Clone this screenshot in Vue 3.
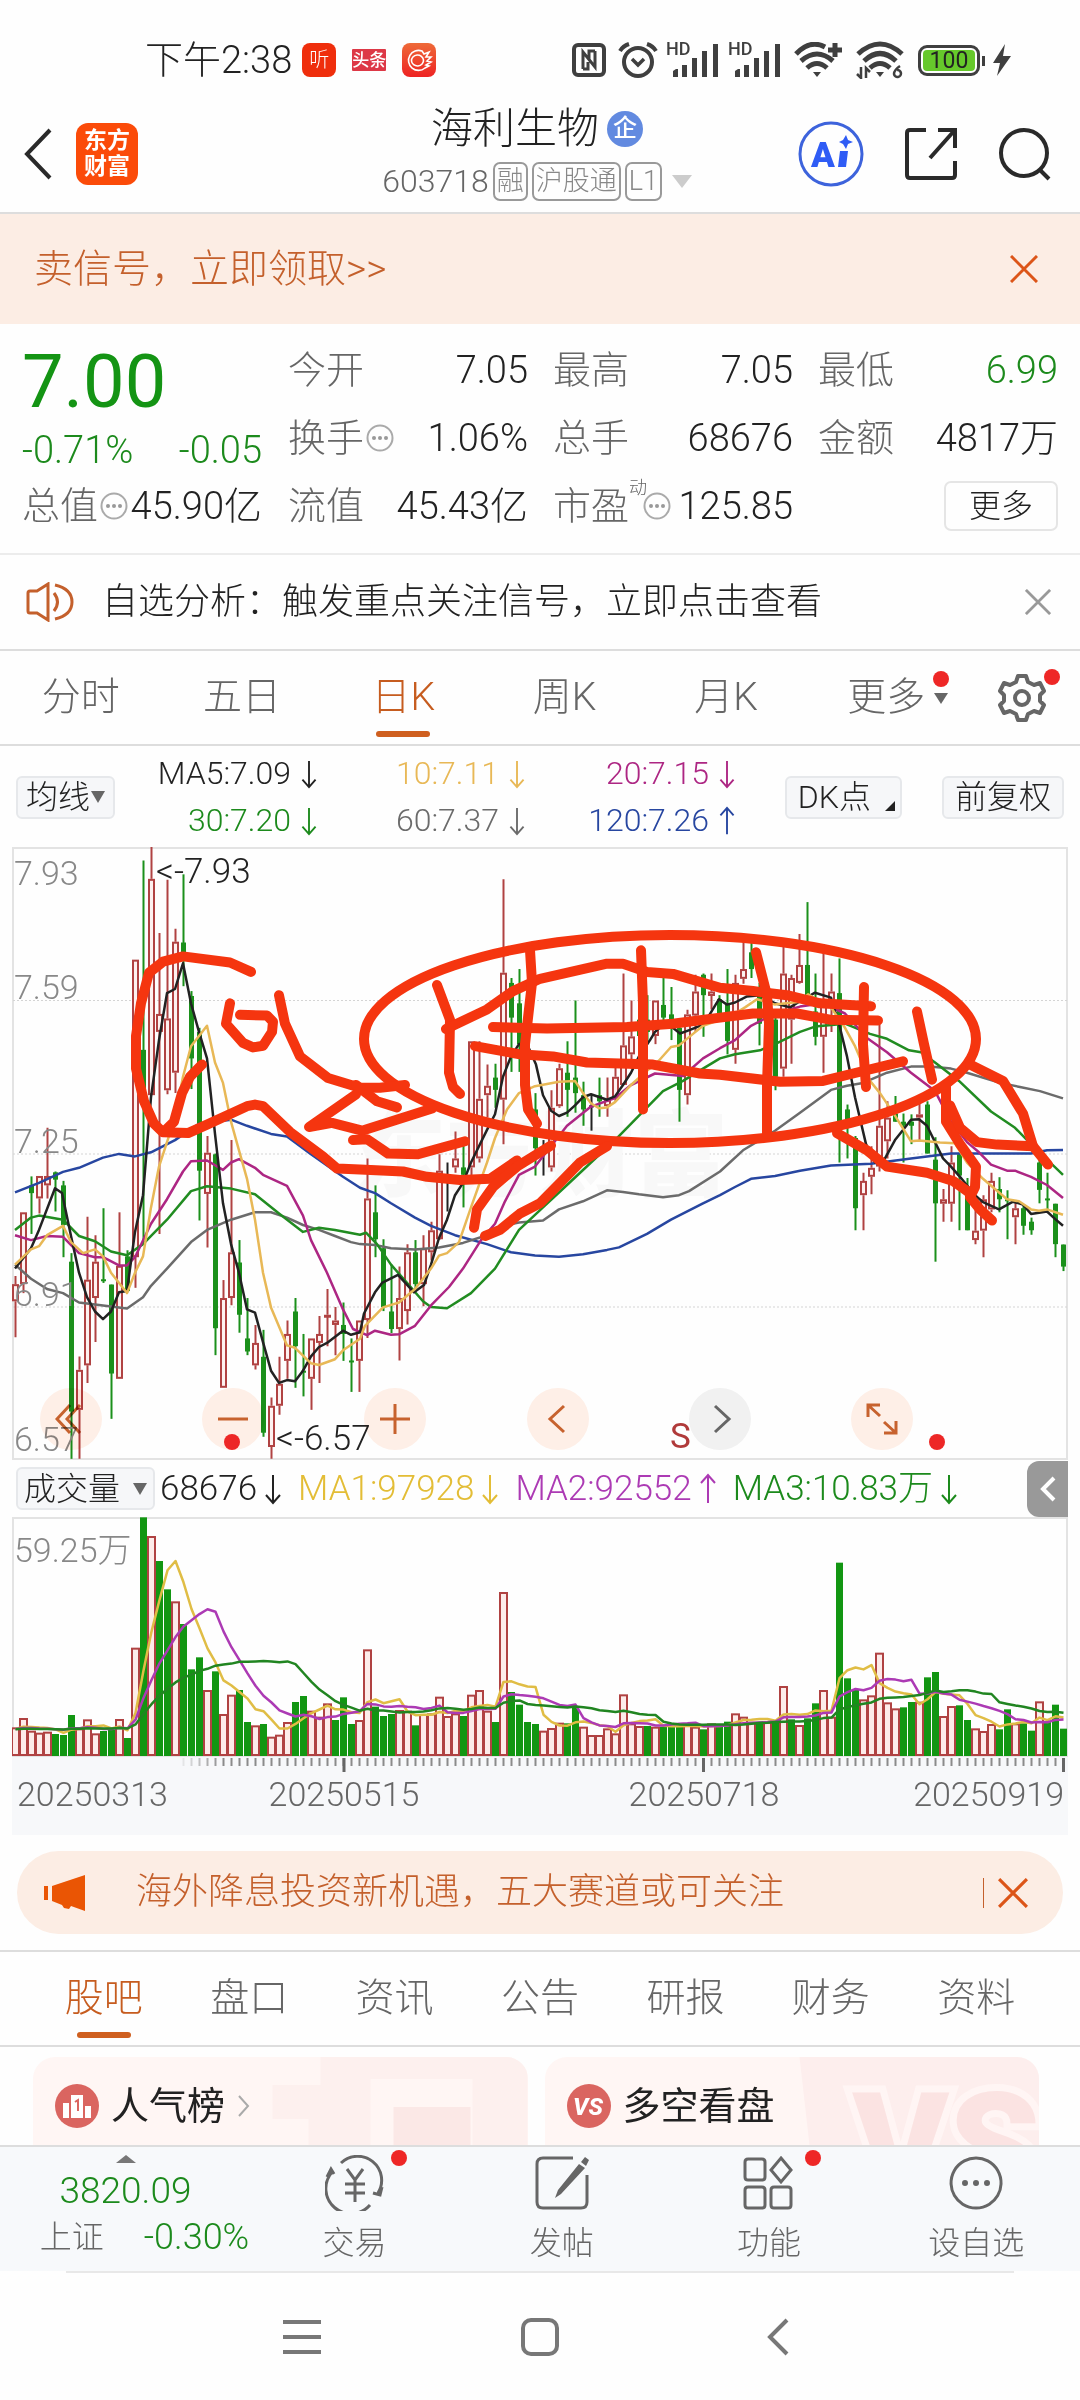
<template>
  <div class="app">
    <svg class="symbols" aria-hidden="true">
      <symbol id="arrow" viewBox="0 0 16 32">
        <path d="M8 2v27M1 22l7 8 7-8" fill="none" stroke="currentColor" stroke-width="2" />
      </symbol>
      <symbol id="close" viewBox="0 0 28 28">
        <path d="M1 1l26 26M27 1L1 27" fill="none" stroke="currentColor" stroke-width="3" />
      </symbol>
      <symbol id="more-dot" viewBox="0 0 28 28">
        <circle cx="14" cy="14" r="12.5" fill="none" stroke="#aaa" stroke-width="2" />
        <g fill="#999"><circle cx="8" cy="14" r="2" /><circle cx="14" cy="14" r="2" /><circle cx="20" cy="14" r="2" /></g>
      </symbol>
      <symbol id="signal" viewBox="0 0 52 36">
        <path d="M3 35v-6l3-2h2v8zM12 35V23h5v12zM22 35V16h5v19zM32 35V9h5v26zM43 35V2h5v33z" fill="#3f3f3f" />
      </symbol>
    </svg>

    <div class="status-bar">
      <div class="status-left">
        <span class="clock">下午2:38</span>
        <span class="mini listen">听</span>
        <span class="mini toutiao">头条</span>
        <span class="mini flame">
          <svg viewBox="0 0 34 34" width="34" height="34" fill="none" stroke="#fff" stroke-width="1.6">
            <path d="M20 8a10 10 0 1 0 3 17l4-2-3-1 5-3-4-1 4-4-5 0 3-5-5 2zM15 12a6 5.500 0 1 0 1 11 6 5.500 0 0 0-1-11z" />
          </svg>
        </span>
      </div>
      <div class="status-right">
        <svg viewBox="0 0 34 34" width="34" height="34">
          <rect x="2" y="2" width="30" height="30" rx="4" fill="none" stroke="#3f3f3f" stroke-width="4" />
          <path d="M11 26V9l12 15V8M23 8h-6v8M11 26h5v-7" fill="none" stroke="#3f3f3f" stroke-width="3" />
        </svg>
        <svg viewBox="0 0 40 36" width="40" height="36" fill="none" stroke="#3f3f3f">
          <circle cx="20" cy="20" r="14" stroke-width="4" />
          <path d="M14 17l6 6 6-6" stroke-width="3.500" />
          <path d="M2 9q3-5 9-7M38 9q-3-5-9-7" stroke-width="4" />
        </svg>
        <span class="hd"><small>HD</small><svg width="52" height="36"><use href="#signal" /></svg></span>
        <span class="hd"><small>HD</small><svg width="52" height="36"><use href="#signal" /></svg></span>
        <svg viewBox="0 0 50 36" width="50" height="36" fill="none" stroke="#3f3f3f" stroke-width="5">
          <path d="M2 12Q16-3 31 5M7 19q16-14 32 0M13 26q10-9 20 0M41 1v14M34 8h14" />
          <path d="M19 30h8l-4 5z" fill="#3f3f3f" stroke="none" />
        </svg>
        <svg viewBox="0 0 50 38" width="50" height="38" fill="none" stroke="#3f3f3f" stroke-width="5">
          <path d="M2 13q22-20 44 0M8 20q16-15 32 0M14 27q10-9 20 0" />
          <path d="M20 31h8l-4 5z" fill="#3f3f3f" stroke="none" />
          <path d="M5 26v11l-4-4M10 37V27l4 4M44 25q-6 4-6 8a3.500 3.500 0 1 0 3-4" stroke-width="2.500" />
        </svg>
        <span class="battery"><b>100</b></span>
        <svg class="bolt" viewBox="0 0 20 32" width="20" height="32"><path d="M13 0L1 19h7L5 32 19 12h-8z" fill="#3f3f3f" /></svg>
      </div>
    </div>

    <header class="header">
      <div class="header-side start">
        <button class="plain" aria-label="返回">
          <svg viewBox="0 0 32 52" width="32" height="52"><path d="M28 2L5 26l23 24" fill="none" stroke="#2a2a2a" stroke-width="4" /></svg>
        </button>
        <a href="#" class="logo">东方<br />财富</a>
      </div>
      <div class="header-title">
        <h1>海利生物<span class="badge">企</span></h1>
        <p>603718<span class="tag">融</span><span class="tag">沪股通</span><span class="tag">L1</span><i class="tri"></i></p>
      </div>
      <div class="header-side end">
        <button class="plain" aria-label="Ai">
          <svg viewBox="0 0 66 66" width="66" height="66">
            <circle cx="33" cy="33" r="31" fill="none" stroke="#3d63dc" stroke-width="3" />
            <text x="13" y="46" font-size="35" font-weight="900" fill="#2f5cf5">A</text>
            <path d="M42 30h8l-2 16h-8zM48 14l2 5 5 2-5 2-2 5-3-5-4-2 4-2z" fill="#2f5cf5" />
          </svg>
        </button>
        <button class="plain" aria-label="分享">
          <svg viewBox="0 0 54 54" width="54" height="54" fill="none" stroke="#2a2a2a" stroke-width="4">
            <path d="M22 3H6q-3 0-3 3v42q0 3 3 3h42q3 0 3-3V34M34 3h17v18M50 4L26 31" />
          </svg>
        </button>
        <button class="plain" aria-label="搜索">
          <svg viewBox="0 0 54 54" width="54" height="54" fill="none" stroke="#2a2a2a" stroke-width="4">
            <circle cx="26" cy="26" r="23" /><path d="M42 43l9 9" />
          </svg>
        </button>
      </div>
    </header>

    <div class="signal-banner">
      <a href="#">卖信号，立即领取&gt;&gt;</a>
      <button class="plain" aria-label="关闭"><svg width="28" height="28"><use href="#close" /></svg></button>
    </div>

    <section class="quote">
      <div class="price">
        <strong>7.00</strong>
        <div class="change"><span>-0.71%</span><span>-0.05</span></div>
        <div class="cell"><span class="k">总值<svg width="28" height="28"><use href="#more-dot" /></svg></span><span>45.90亿</span></div>
      </div>
      <div class="grid">
        <div v-for="q in quotes" :key="q.label" class="cell">
          <span class="k">{{ q.label }}<sup v-if="q.sup">{{ q.sup }}</sup><svg v-if="q.info" width="28" height="28"><use href="#more-dot" /></svg></span>
          <span :class="{ down: q.down }">{{ q.value }}</span>
        </div>
        <div class="cell right"><button class="more">更多</button></div>
      </div>
    </section>

    <div class="notice">
      <svg viewBox="0 0 48 40" width="48" height="40" fill="none" stroke="#c4602c" stroke-width="3">
        <path d="M22 2L11 9H4q-2 0-2 2v18q0 2 2 2h7l11 7zM28 11q7 9 0 18M29 3q17 4 17 17T29 37" />
      </svg>
      <a href="#">自选分析：触发重点关注信号，立即点击查看</a>
      <button class="plain" aria-label="关闭"><svg width="26" height="26"><use href="#close" /></svg></button>
    </div>

    <nav class="period">
      <div class="period-tabs">
        <button v-for="p in periods" :key="p" class="tab" :class="{ active: p === period }" @click="period = p">{{ p }}</button>
        <button class="tab">更多<span class="drop"><i class="dot"></i><i class="tri"></i></span></button>
      </div>
      <button class="plain gear" aria-label="设置">
        <svg viewBox="0 0 50 50" width="50" height="50" fill="none" stroke="#666" stroke-width="4" stroke-linejoin="round">
          <path d="M21 3h8l2 6 6 3 6-2 4 8-4 4v6l4 4-4 8-6-2-6 3-2 6h-8l-2-6-6-3-6 2-4-8 4-4v-6l-4-4 4-8 6 2 6-3z" />
          <circle cx="25" cy="25" r="7" />
        </svg>
        <i class="dot"></i>
      </button>
    </nav>

    <div class="ma-row">
      <label class="chip"><select aria-label="均线"><option>均线</option></select><i class="tri"></i></label>
      <div class="ma-grid">
        <span v-for="m in averages" :key="m.text" :class="m.cls">{{ m.text }}<svg :class="{ up: m.up }" width="16" height="30"><use href="#arrow" /></svg></span>
      </div>
      <button class="chip dk">DK点<i></i></button>
      <button class="chip">前复权</button>
    </div>

    <div class="chart">
      <svg class="plot" viewBox="12 0 1056 613">
        <rect x="13" y="1" width="1054" height="611" fill="none" stroke="#e3e3e3" stroke-width="2" />
        <path d="M13 153.500H1067M13 307H1067M13 460H1067" stroke="#d4d4d4" stroke-dasharray="2 2" />
        <text class="watermark" x="540" y="342">东方财富</text>
        <g v-for="(c, i) in candles" :key="i" :class="['candle', c[0]]">
          <path v-if="c[0] === 'r'" :d="wicks(c, i)" />
          <path v-else :d="`M${x(i)} ${y(c[3])}V${y(c[4])}`" />
          <rect v-if="c[0] === 'r'" :x="x(i) - 2.5" :y="y(c[1]) + 1" width="5" :height="Math.max(y(c[2]) - y(c[1]) - 2, 1)" />
          <rect v-else :x="x(i) - 2.5" :y="y(c[1])" width="5" :height="Math.max(y(c[2]) - y(c[1]), 2)" />
        </g>
        <g class="lines">
          <polyline v-for="l in maLines" :key="l.color" :points="scaled(l.points)" :stroke="l.color" />
        </g>
        <g class="axis">
          <text x="14" y="38">7.93</text>
          <text x="14" y="152">7.59</text>
          <text x="14" y="306">7.25</text>
          <text x="14" y="459">6.91</text>
          <text x="14" y="604">6.57</text>
        </g>
        <g class="extreme">
          <text x="156" y="36">&lt;-7.93</text>
          <text x="276" y="603">&lt;-6.57</text>
        </g>
        <text class="sell" x="670" y="601">S</text>
      </svg>
      <div class="controls">
        <button v-for="c in controls" :key="c.name" class="round" :class="c.name" :aria-label="c.name">
          <svg viewBox="0 0 32 32" width="32" height="32"><path :d="c.d" /></svg>
          <i v-if="c.dot" class="dot"></i>
        </button>
      </div>
      <svg class="doodle" viewBox="12 0 1056 613">
        <ellipse cx="670" cy="192" rx="306" ry="104" />
        <polyline v-for="(s, i) in strokes" :key="i" :points="scaled(s)" />
      </svg>
    </div>

    <div class="vol-row">
      <label class="chip vol-select"><select aria-label="成交量"><option>成交量</option></select><i class="tri"></i></label>
      <span v-for="m in volAverages" :key="m.text" :class="m.cls">{{ m.text }}<svg :class="{ up: m.up }" width="16" height="34"><use href="#arrow" /></svg></span>
      <button class="fold" aria-label="收起">
        <svg viewBox="0 0 16 26" width="16" height="26"><path d="M14 2L3 13l11 11" fill="none" stroke="#fff" stroke-width="4" /></svg>
      </button>
    </div>

    <div class="volume">
      <svg class="plot" viewBox="12 0 1056 318">
        <rect x="13" y="1" width="1054" height="238" fill="none" stroke="#e3e3e3" stroke-width="2" />
        <rect x="12" y="240" width="1056" height="78" fill="#f7f8fa" />
        <template v-for="(v, i) in volumes" :key="i">
          <rect v-if="rising.has(i)" class="vol-r" :x="x(i) - 3.5" :y="vy(v) + 1" width="7" :height="237 - vy(v)" />
          <rect v-else class="vol-g" :x="x(i) - 3.5" :y="vy(v)" width="7" :height="239 - vy(v)" />
        </template>
        <g class="lines">
          <polyline :points="volumeAverage(5)" stroke="#e0bd45" />
          <polyline :points="volumeAverage(10)" stroke="#ac3ab4" />
          <polyline :points="volumeAverage(20)" stroke="#218521" />
        </g>
        <path v-for="n in 111" :key="n" :d="`M${x(n + 20)} 241v8`" stroke="#8b8b8b" stroke-width="2" :opacity="Math.min(n / 6, 1)" />
        <path d="M344 241v14M703.500 241v14M1063.500 241v14" stroke="#666" stroke-width="3" />
        <text class="axis-top" x="14" y="45">59.25万</text>
        <g class="dates">
          <text x="17" y="289">20250313</text>
          <text x="344" y="289" text-anchor="middle">20250515</text>
          <text x="704" y="289" text-anchor="middle">20250718</text>
          <text x="1064" y="289" text-anchor="end">20250919</text>
        </g>
      </svg>
    </div>

    <div class="promo">
      <svg viewBox="0 0 42 38" width="42" height="38" fill="#ea5504"><path d="M0 12h4v14H0zM8 12L41 1v36L27 32l-2 3-5-1-2-3-10-4z" /></svg>
      <a href="#">海外降息投资新机遇，五大赛道或可关注</a>
      <button class="plain" aria-label="关闭"><svg width="30" height="30"><use href="#close" /></svg></button>
    </div>

    <nav class="sections">
      <button v-for="s in sections" :key="s" class="tab" :class="{ active: s === section }" @click="section = s">{{ s }}</button>
    </nav>

    <div class="cards">
      <a href="#" class="card">
        <svg class="card-bg" viewBox="0 0 495 88" preserveAspectRatio="xMaxYMin slice">
          <path d="M288 0h207v88H276V62h-36V28h48z" fill="#fdf0ee" />
          <path d="M338 88V22h102v66z" fill="#fff6f4" /><path d="M361 50h77v38h-77z" fill="#fbe8e6" />
        </svg>
        <svg viewBox="0 0 44 44" width="44" height="44">
          <circle cx="22" cy="22" r="22" fill="#da6560" />
          <path d="M8 19h6v15H8zM16 11h12v23H16zM30 22h6v12h-6z" fill="#fff" />
          <path d="M20 18l3-2v11" fill="none" stroke="#da6560" stroke-width="2" />
        </svg>
        <span>人气榜</span>
        <svg viewBox="0 0 14 24" width="14" height="24"><path d="M2 2l9 10-9 10" fill="none" stroke="#aaa" stroke-width="2" /></svg>
      </a>
      <a href="#" class="card">
        <svg class="card-bg" viewBox="0 0 495 88" preserveAspectRatio="xMaxYMin slice">
          <path d="M255 0h240v88H265z" fill="#fdeeed" />
          <text x="308" y="140" font-size="146" font-weight="900" fill="#fbe3e2" stroke="#fff5f4" stroke-width="14" paint-order="stroke">VS</text>
        </svg>
        <svg viewBox="0 0 44 44" width="44" height="44">
          <circle cx="22" cy="22" r="22" fill="#da6560" />
          <text x="21" y="31" text-anchor="middle" font-size="24" font-weight="800" font-style="italic" fill="#fff">VS</text>
        </svg>
        <span>多空看盘</span>
      </a>
    </div>

    <footer class="toolbar">
      <a href="#" class="index">
        <i class="tri"></i>
        <b>3820.09</b>
        <span class="index-row"><span>上证</span><em>-0.30%</em></span>
      </a>
      <button v-for="t in tools" :key="t.label" class="tool">
        <span class="tool-icon">
          <svg viewBox="0 0 60 56" width="60" height="56"><path :d="t.d" /><path v-if="t.fill" :d="t.fill" class="solid" /></svg>
          <i v-if="t.dot" class="dot"></i>
        </span>
        {{ t.label }}
      </button>
    </footer>

    <div class="sys-nav">
      <button class="plain" aria-label="菜单"><svg viewBox="0 0 38 38" width="38" height="38"><path d="M0 4h38M0 19h38M0 34h38" /></svg></button>
      <button class="plain" aria-label="主页"><svg viewBox="0 0 38 38" width="38" height="38"><rect x="2" y="2" width="34" height="34" rx="8" /></svg></button>
      <button class="plain" aria-label="返回"><svg viewBox="0 0 38 38" width="38" height="38"><path d="M28 2L11 19l17 17" /></svg></button>
    </div>
  </div>
</template>

<script setup>
import { ref } from 'vue'

const period = ref('日K')
const section = ref('股吧')
const periods = ['分时', '五日', '日K', '周K', '月K']
const sections = ['股吧', '盘口', '资讯', '公告', '研报', '财务', '资料']

const quotes = [
  { label: '今开', value: '7.05' },
  { label: '最高', value: '7.05' },
  { label: '最低', value: '6.99', down: true },
  { label: '换手', value: '1.06%', info: true },
  { label: '总手', value: '68676' },
  { label: '金额', value: '4817万' },
  { label: '流值', value: '45.43亿' },
  { label: '市盈', value: '125.85', sup: '动', info: true }
]

const averages = [
  { text: 'MA5:7.09', cls: 'black' },
  { text: '10:7.11', cls: 'yellow' },
  { text: '20:7.15', cls: 'magenta' },
  { text: '30:7.20', cls: 'green' },
  { text: '60:7.37', cls: 'gray' },
  { text: '120:7.26', cls: 'blue', up: true }
]

const volAverages = [
  { text: '68676', cls: 'black' },
  { text: 'MA1:97928', cls: 'gold' },
  { text: 'MA2:92552', cls: 'purple', up: true },
  { text: 'MA3:10.83万', cls: 'green' }
]

const controls = [
  { name: 'first', d: 'M15 2L2 16l13 14M25 2L12 16l13 14' },
  { name: 'shrink', d: 'M1 16h30', dot: true },
  { name: 'grow', d: 'M1 16h30M16 1v30' },
  { name: 'prev', d: 'M22 3L8 16l14 13' },
  { name: 'next', d: 'M11 3l14 13-14 13' },
  { name: 'expand', d: 'M14 2H2v12M2 2l12 11M18 30h12V18M30 30L18 19', dot: true }
]

const tools = [
  { label: '交易', dot: true, d: 'M16 8A24 24 0 0 1 53 38M57 32l-2 8-7-2M45 50A24 24 0 0 1 7 17M2 22l4-8 3 5M22 14l8 11 8-11M30 25v22M20 29h20M20 38h20' },
  { label: '发帖', d: 'M41 3H11q-6 0-6 6v38q0 6 6 6h38q6 0 6-6V20', fill: 'M47 9l6 4-24 26-6 4 3-8zM49 7l4-5 4 3-3 6z' },
  { label: '功能', dot: true, d: 'M9 4h14q3 0 3 3v15q0 3-3 3H9q-3 0-3-3V7q0-3 3-3zM9 32h14q3 0 3 3v15q0 3-3 3H9q-3 0-3-3V35q0-3 3-3zM35 32h14q3 0 3 3v15q0 3-3 3H35q-3 0-3-3V35q0-3 3-3zM42 3l10 12-10 12-10-12z' },
  { label: '设自选', d: 'M30 3a25 25 0 1 0 .1 0z', fill: 'M16 28a3 3 0 1 0 6 0 3 3 0 1 0-6 0zM27 28a3 3 0 1 0 6 0 3 3 0 1 0-6 0zM38 28a3 3 0 1 0 6 0 3 3 0 1 0-6 0z' }
]

// [kind, body top, body bottom, high, low], r = up, g = down, k = flat
const candles = [
  ['r', 1088, 1130, 1068, 1218], ['r', 912, 1088, 912, 1110], ['g', 846, 865, 824, 965], ['r', 823, 878, 823, 915],
  ['r', 823, 846, 705, 878], ['g', 814, 832, 812, 910], ['g', 846, 943, 835, 1022], ['g', 1033, 1400, 1012, 1516],
  ['r', 1298, 1396, 1265, 1516], ['r', 1077, 1287, 923, 1330], ['r', 1033, 1122, 968, 1230], ['g', 1076, 1080, 902, 1085],
  ['g', 1089, 1307, 1089, 1418], ['r', 1043, 1320, 912, 1320], ['g', 1020, 1105, 1005, 1108], ['r', 293, 1022, 293, 1097],
  ['g', 514, 650, 50, 985], ['r', 95, 625, 17, 625], ['r', 426, 470, 228, 965], ['r', 437, 613, 97, 623],
  ['r', 249, 570, 217, 620], ['g', 251, 290, 84, 358], ['g', 382, 535, 370, 610], ['g', 470, 810, 460, 932],
  ['r', 766, 867, 725, 998], ['g', 770, 1196, 768, 1262], ['r', 1122, 1342, 1078, 1342], ['r', 1010, 1122, 735, 1140],
  ['g', 1035, 1163, 980, 1207], ['g', 1221, 1253, 1122, 1262], ['r', 1232, 1287, 1188, 1297], ['g', 1266, 1452, 1200, 1462],
  ['r', 1386, 1487, 1366, 1516], ['r', 1332, 1386, 1266, 1408], ['r', 1210, 1276, 1177, 1320], ['g', 1155, 1240, 1122, 1342],
  ['g', 1300, 1305, 1210, 1363], ['r', 1221, 1320, 1221, 1396], ['r', 1210, 1232, 1166, 1330], ['r', 1163, 1168, 1100, 1240],
  ['r', 1177, 1188, 1144, 1262], ['g', 1188, 1210, 1133, 1276], ['g', 1275, 1279, 1221, 1352], ['r', 1177, 1276, 1177, 1352],
  ['r', 878, 1176, 780, 1220], ['g', 912, 978, 846, 1022], ['g', 1000, 1144, 978, 1154], ['g', 1155, 1198, 1040, 1208],
  ['r', 1122, 1198, 1045, 1275], ['r', 1010, 1154, 990, 1187], ['g', 1010, 1088, 980, 1100], ['r', 1000, 1088, 968, 1142],
  ['r', 956, 1010, 935, 1030], ['r', 810, 978, 770, 980], ['k', 820, 824, 790, 910], ['r', 780, 802, 714, 815],
  ['g', 802, 820, 735, 900], ['r', 493, 802, 493, 825], ['r', 634, 780, 493, 790], ['r', 602, 625, 550, 680],
  ['g', 582, 612, 548, 656], ['r', 325, 636, 96, 745], ['g', 350, 435, 338, 568], ['g', 400, 500, 316, 568],
  ['g', 480, 600, 380, 640], ['g', 660, 755, 620, 822], ['k', 760, 764, 735, 822], ['r', 656, 802, 613, 812],
  ['r', 559, 652, 548, 656], ['g', 570, 612, 493, 678], ['g', 582, 620, 393, 668], ['g', 625, 660, 592, 700],
  ['k', 650, 654, 622, 712], ['g', 625, 640, 582, 678], ['r', 636, 652, 582, 678], ['r', 580, 634, 548, 640],
  ['r', 503, 600, 327, 600], ['r', 481, 525, 393, 560], ['g', 440, 480, 400, 500], ['g', 440, 470, 380, 500],
  ['r', 393, 480, 393, 500], ['g', 404, 435, 338, 460], ['g', 427, 440, 360, 490], ['g', 460, 612, 440, 690],
  ['r', 427, 625, 416, 648], ['r', 371, 430, 330, 470], ['g', 330, 380, 327, 482], ['r', 371, 382, 327, 415],
  ['g', 390, 430, 380, 440], ['g', 400, 492, 316, 525], ['r', 350, 514, 330, 548], ['r', 316, 340, 250, 352],
  ['g', 275, 316, 240, 338], ['g', 380, 450, 350, 503], ['k', 405, 409, 390, 440], ['g', 440, 580, 420, 613],
  ['r', 327, 560, 262, 580], ['r', 338, 440, 330, 548], ['r', 306, 350, 230, 352], ['g', 306, 380, 152, 390],
  ['g', 420, 482, 327, 503], ['r', 390, 482, 275, 570], ['r', 371, 400, 327, 470], ['g', 375, 690, 290, 790],
  ['g', 660, 690, 648, 780], ['g', 730, 902, 725, 956], ['r', 835, 870, 815, 956], ['r', 803, 825, 750, 868],
  ['r', 700, 800, 450, 812], ['r', 680, 738, 640, 780], ['g', 670, 690, 627, 690], ['g', 690, 700, 670, 790],
  ['g', 690, 700, 672, 745], ['r', 672, 680, 640, 735], ['g', 648, 768, 640, 768], ['g', 783, 890, 728, 1033],
  ['r', 880, 891, 855, 935], ['r', 790, 891, 750, 935], ['g', 770, 822, 766, 956], ['g', 850, 956, 828, 956],
  ['r', 957, 980, 880, 990], ['r', 880, 957, 870, 1022], ['r', 835, 905, 815, 912], ['g', 855, 880, 826, 912],
  ['g', 880, 884, 858, 978], ['r', 902, 924, 890, 990], ['g', 902, 945, 895, 967], ['g', 935, 956, 925, 967],
  ['g', 790, 857, 780, 890], ['g', 878, 882, 815, 912], ['g', 891, 990, 891, 1022], ['g', 991, 1045, 991, 1056]
]

const maLines = [
  {
    color: '#2746a0',
    points: '15,863 39,840 63,813 79,803 103,778 119,769 135,775 151,765 175,735 199,695 231,685 247,700 271,720 287,726 311,770 343,825 360,852 375,865 391,890 415,925 431,945 455,968 487,990 511,1010 535,1018 559,1021 583,1015 607,1004 619,998 647,965 671,930 703,890 720,870 735,850 751,830 775,823 800,810 831,797 871,793 911,780 951,768 999,768 1031,768 1047,760 1063,759'
  },
  {
    color: '#6b6b6b',
    points: '15,1040 31,1075 47,1100 63,1110 79,1133 103,1140 127,1148 143,1120 151,1092 167,1050 191,985 207,955 231,930 255,912 271,912 287,925 303,943 319,955 335,970 351,985 360,990 375,992 391,1000 415,1003 439,998 463,987 487,968 503,945 519,937 543,932 559,905 583,885 607,858 623,862 639,868 663,875 679,870 689,860 720,812 743,760 775,712 800,668 831,612 847,602 863,595 887,570 911,555 930,555 951,560 967,570 1000,595 1020,605 1040,615 1063,633'
  },
  {
    color: '#218c21',
    points: '15,955 31,925 39,920 63,930 79,970 95,983 111,1008 127,1017 143,990 167,930 191,860 207,848 231,854 255,868 279,915 303,960 319,950 335,955 360,967 366,962 377,990 391,1040 407,1085 423,1130 431,1144 447,1147 471,1110 495,1050 519,955 543,900 567,845 591,790 615,735 639,675 663,615 683,590 703,560 720,535 735,525 760,515 775,500 800,470 815,457 845,450 870,475 887,487 909,515 921,520 935,545 959,590 991,665 1015,705 1031,745 1063,820'
  },
  {
    color: '#ad2683',
    points: '15,968 31,980 47,970 63,972 79,1012 95,1022 103,1022 119,1042 127,1042 135,1022 151,940 167,880 183,812 191,787 207,785 223,808 231,790 239,782 255,803 263,820 287,847 303,920 311,980 327,1060 343,1150 353,1198 367,1213 375,1202 391,1212 399,1211 415,1190 431,1140 449,1095 463,1050 481,980 495,940 505,885 519,820 535,800 551,750 567,700 591,653 615,632 631,600 655,572 683,578 703,535 720,510 735,490 751,455 775,425 800,408 823,400 845,425 867,485 887,520 911,570 935,615 951,690 967,740 979,765 991,795 1007,810 1015,810 1031,825 1047,845 1063,877'
  },
  {
    color: '#222',
    points: '15,1050 31,1000 39,955 55,853 62,865 71,970 79,1060 87,1120 95,1155 103,1174 111,1155 119,1108 127,1105 135,960 143,870 151,630 159,490 167,375 175,365 183,302 191,400 199,470 207,535 215,720 223,890 231,990 239,1060 247,1150 255,1158 263,1230 271,1300 279,1330 287,1323 295,1326 303,1300 311,1265 319,1242 327,1232 343,1202 351,1212 360,1206 364,1160 375,1108 382,1085 398,1065 414,1108 424,1090 431,1040 439,975 447,930 455,870 463,840 471,790 487,710 495,672 503,580 511,530 519,500 527,500 536,550 543,625 551,663 559,676 567,668 575,650 583,630 591,623 607,636 615,628 623,600 631,570 639,530 650,490 655,470 662,455 672,458 680,474 690,465 700,455 709,430 719,390 727,403 735,398 747,383 760,380 775,400 790,410 800,395 815,374 831,386 839,450 847,530 855,630 866,745 875,790 885,780 895,735 903,710 911,685 919,684 927,700 943,780 951,800 960,825 975,870 983,887 999,905 1013,886 1023,893 1031,916 1047,910 1055,928 1063,945'
  },
  {
    color: '#e8b856',
    points: '15,1040 31,1003 39,995 47,968 63,945 71,985 83,1012 95,1003 103,1020 111,1060 127,1110 135,1060 143,1020 151,900 159,800 167,740 175,680 183,580 191,505 199,480 207,455 215,545 223,595 231,690 239,760 247,830 255,930 263,1060 271,1145 287,1238 295,1244 311,1282 319,1286 335,1272 343,1250 360,1222 365,1190 383,1145 399,1133 415,1100 431,1050 439,1018 447,1012 459,985 471,900 487,790 495,730 507,660 519,620 535,603 559,592 575,590 583,620 591,645 599,657 607,655 615,642 631,600 647,565 659,540 671,507 679,503 693,475 703,455 720,440 735,425 745,410 757,390 775,403 800,396 808,378 831,410 845,460 855,505 870,590 880,620 895,675 911,738 919,736 940,741 955,743 967,790 983,830 1007,880 1019,885 1031,905 1039,908 1047,905 1063,918'
  }
]

const strokes = [
  '251,323 230,300 183,285 163,298 149,325 141,400 136,480 136,560 144,640 154,695 163,716 188,718 207,697 247,652 255,648 263,652 290,715 323,775 337,805 360,807 403,812 427,825 460,833 490,830 517,785',
  '164,714 174,690 182,620 190,580 202,550',
  '230,400 226,450 243,497 253,508 263,504 272,470 273,445 267,430 240,428',
  '279,380 285,450 300,530 328,583 360,607 380,607 405,600',
  '356,623 309,703 332,693 362,712 432,658',
  '356,600 377,640 397,655',
  '353,735 367,733 388,768 418,770 465,738',
  '551,748 517,800 493,850 477,905 474,950',
  '485,970 500,955 520,915 540,890 560,840 580,790 607,750',
  '437,355 450,440 449,570 453,605 460,622',
  '446,463 487,415 513,370 540,340 607,303 623,303 647,323 673,328 720,362 753,370 787,380 820,400 871,407',
  '493,458 547,462 627,458 673,450 720,435 753,425 797,425 830,440 878,442',
  '475,505 520,525 553,530 587,545 653,550 700,572 720,575 780,592 823,590 853,572 903,542',
  '530,270 532,350 525,500 525,600 528,660 537,695',
  '641,270 643,400 643,660',
  '756,275 767,380 769,450 767,600 767,720',
  '864,360 863,500 866,605',
  '917,420 924,500 932,587',
  '946,600 946,690 960,745 976,800 975,850 970,875 980,905 992,932',
  '950,650 960,705 977,740 997,746 1033,750',
  '970,550 1003,590 1023,670 1033,750 1048,795',
  '837,718 867,760 887,800 927,815 953,835 970,865'
]

const volumes = [
  802, 774, 812, 818, 815, 822, 825, 765, 805, 778, 820, 813, 810, 777, 834, 563, 172, 228, 303, 388, 424, 492,
  628, 592, 690, 634, 762, 704, 690, 786, 796, 792, 830, 824, 786, 726, 708, 752, 770, 730, 780, 712, 792, 780,
  568, 740, 768, 762, 750, 752, 796, 762, 760, 710, 768, 760, 768, 704, 690, 752, 786, 396, 696, 734, 786, 792,
  812, 804, 788, 790, 740, 800, 825, 825, 805, 820, 703, 790, 798, 798, 800, 800, 798, 798, 795, 800, 808, 790,
  795, 785, 760, 770, 785, 785, 785, 785, 678, 778, 795, 775, 730, 690, 770, 308, 655, 690, 718, 706, 578, 727,
  745, 742, 726, 725, 652, 636, 768, 738, 736, 780, 805, 813, 792, 808, 748, 790, 790, 812, 724, 785, 734, 806
]

const rising = new Set([
  0, 1, 2, 3, 4, 8, 9, 10, 13, 15, 17, 20, 24, 26, 27, 30, 32, 33, 34, 37, 38, 39, 43, 44, 48, 49, 51, 52, 53, 54,
  55, 57, 58, 59, 61, 66, 67, 68, 71, 72, 73, 74, 75, 76, 77, 78, 80, 84, 85, 87, 90, 91, 92, 94, 96, 98, 101,
  102, 106, 107, 108, 109, 110, 113, 116, 117, 120, 121, 122, 125, 128
])

const x = i => 15.5 + i * 8
const y = v => (v - 17) / 2.45
const vy = v => (v - 171) / 3

const scaled = points => points.split(' ').map(p => {
  const [px, v] = p.split(',').map(Number)
  return `${px},${y(v).toFixed(1)}`
}).join(' ')

const wicks = (c, i) => `M${x(i)} ${y(c[3])}V${y(c[1])}M${x(i)} ${y(c[2])}V${y(c[4])}`

const volumeAverage = n => volumes.map((_, i) => {
  let sum = 0
  for (let k = i - n + 1; k <= i; k++) sum += k < 0 ? 808 : volumes[k]
  return `${x(i)},${vy(sum / n).toFixed(1)}`
}).join(' ')
</script>

<style>
body {
  margin: 0;
  background: #fff;
}
</style>

<style scoped>
.app {
  font-family: Roboto, 'Noto Sans CJK SC', sans-serif;
  font-weight: 300;
  color: #222;
  background: #fefefe;
}

.app * {
  box-sizing: border-box;
}

svg {
  display: block;
  flex: none;
}

.symbols {
  display: none;
}

button,
select {
  font: inherit;
  color: inherit;
  border: 0;
  padding: 0;
  background: none;
  cursor: pointer;
}

a {
  color: inherit;
  text-decoration: none;
}

.tri {
  display: inline-block;
  border: 5px solid transparent;
  border-top: 10px solid #666;
  border-bottom: 0;
}

.dot {
  width: 16px;
  height: 16px;
  border-radius: 50%;
  background: #ee2726;
}

.black { color: #222; }
.yellow { color: #e8b856; }
.magenta { color: #ad2683; }
.green { color: #1c8a1c; }
.gray { color: #6b6b6b; }
.blue { color: #2746a0; }
.gold { color: #e3bd36; }
.purple { color: #ac3ab4; }

/* Status bar */
.status-bar {
  display: flex;
  justify-content: space-between;
  align-items: center;
  padding: 36px 68px 12px 145px;
}

.status-left,
.status-right {
  display: flex;
  align-items: center;
  height: 48px;
}

.status-left {
  gap: 16px;
}

.status-right {
  gap: 12px;
}

.clock {
  font-size: 38px;
  line-height: 48px;
  margin-right: -6px;
}

.mini {
  width: 34px;
  height: 34px;
  border-radius: 8px;
  background: #ef2e0c;
  color: #fff;
  font-size: 20px;
  line-height: 34px;
  text-align: center;
}

.mini.toutiao {
  height: 22px;
  border-radius: 1px;
  background: #dd3846;
  font-size: 17px;
  line-height: 22px;
  font-weight: 500;
}

.mini.flame {
  background: linear-gradient(#ee6a38, #ee2323);
}

.hd {
  position: relative;
  margin-right: -2px;
}

.hd small {
  position: absolute;
  left: -4px;
  top: -2px;
  font-size: 18px;
  line-height: 18px;
  font-weight: 500;
  color: #3f3f3f;
}

.battery {
  position: relative;
  width: 62px;
  height: 31px;
  padding: 2px;
  border: 3px solid #3f3f3f;
  border-radius: 9px;
}

.battery::after {
  content: '';
  position: absolute;
  right: -8px;
  top: 8px;
  width: 3px;
  height: 10px;
  background: #3f3f3f;
}

.battery b {
  display: block;
  border-radius: 4px;
  background: #66c82b;
  font-size: 23px;
  line-height: 21px;
  font-weight: 400;
  text-align: center;
}

/* Header */
.header {
  display: flex;
  align-items: center;
  justify-content: space-between;
  padding: 6px 28px;
  border-bottom: 2px solid #ddd;
}

.header-side {
  display: flex;
  align-items: center;
  gap: 22px;
  width: 254px;
}

.header-side.start {
  margin-left: -6px;
}

.header-side.end {
  justify-content: space-between;
}

.logo {
  width: 62px;
  height: 62px;
  padding: 5px 0;
  border-radius: 12px;
  background: #fb4b09;
  color: #fff;
  font-size: 23px;
  line-height: 26px;
  font-weight: 700;
  text-align: center;
}

.header-title {
  text-align: center;
}

.header-title h1 {
  display: flex;
  align-items: center;
  justify-content: center;
  gap: 8px;
  margin: 0;
  font-size: 42px;
  line-height: 54px;
  font-weight: 300;
}

.badge {
  width: 36px;
  height: 36px;
  border-radius: 50%;
  background: #628ae0;
  color: #fff;
  font-size: 24px;
  line-height: 34px;
  font-weight: 500;
}

.header-title p {
  display: flex;
  align-items: center;
  justify-content: center;
  gap: 4px;
  margin: 0;
  font-size: 32px;
  line-height: 50px;
  color: #666;
}

.tag {
  padding: 0 2px;
  border: 2px solid #999;
  border-radius: 7px;
  font-size: 27px;
  line-height: 35px;
  color: #888;
}

.header-title .tri {
  margin-left: 6px;
  border-width: 13px 10px 0;
  border-top-color: #ccc;
}

/* Banner */
.signal-banner {
  display: flex;
  align-items: center;
  justify-content: space-between;
  padding: 26px 42px 26px 34px;
  background: #fcede4;
  color: #c4602c;
  font-size: 39px;
  line-height: 58px;
}

.signal-banner .plain,
.promo .plain {
  color: #dc5518;
}

/* Quote */
.quote {
  display: flex;
  gap: 26px;
  padding: 12px 22px 13px;
  border-bottom: 2px solid #ececec;
  font-size: 38px;
}

.price {
  flex: 0 0 240px;
}

.price strong {
  display: block;
  font-size: 74px;
  line-height: 92px;
  font-weight: 400;
  color: #149414;
}

.change {
  display: flex;
  justify-content: space-between;
  line-height: 44px;
  color: #1c8a1c;
}

.grid {
  flex: 1;
  display: grid;
  grid-template-columns: repeat(3, 1fr);
  column-gap: 25px;
}

.cell {
  display: flex;
  align-items: center;
  justify-content: space-between;
  height: 68px;
  line-height: 44px;
  white-space: nowrap;
}

.cell.right {
  justify-content: flex-end;
}

.k {
  display: flex;
  align-items: center;
  color: #666;
}

.k svg {
  margin-left: 2px;
}

.k sup {
  align-self: flex-start;
  margin: -6px -6px 0 0;
  font-size: 18px;
  line-height: 20px;
}

.down {
  color: #1c8a1c;
}

.more {
  width: 114px;
  height: 50px;
  border: 2px solid #e5e5e5;
  border-radius: 7px;
  font-size: 32px;
  line-height: 44px;
}

/* Notice */
.notice {
  display: flex;
  align-items: center;
  gap: 28px;
  padding: 20px 29px 20px 26px;
  border-bottom: 2px solid #ddd;
  font-size: 36px;
  line-height: 54px;
}

.notice a {
  flex: 1;
}

.notice .plain {
  color: #999;
}

/* Tabs */
.period {
  display: flex;
  border-bottom: 2px solid #ddd;
}

.period-tabs {
  flex: 1;
  display: flex;
}

.tab {
  position: relative;
  flex: 1;
  display: flex;
  align-items: center;
  justify-content: center;
  font-size: 39px;
  line-height: 93px;
  color: #666;
}

.tab.active {
  color: #c65c1f;
}

.tab.active::after {
  content: '';
  position: absolute;
  left: 50%;
  bottom: 7px;
  width: 54px;
  height: 6px;
  margin-left: -27px;
  border-radius: 3px;
  background: #cf5f1f;
}

.drop {
  display: flex;
  flex-direction: column;
  align-items: center;
  gap: 6px;
  margin: 0 -22px 20px 8px;
}

.drop .tri {
  border-width: 11px 7px 0;
}

.gear {
  position: relative;
  width: 112px;
  padding-left: 29px;
}

.gear .dot {
  position: absolute;
  right: 20px;
  top: 18px;
}

/* Moving averages */
.ma-row {
  display: flex;
  align-items: center;
  padding: 4px 16px 3px;
  font-size: 32px;
}

.chip {
  display: flex;
  align-items: center;
  justify-content: center;
  height: 43px;
  padding: 0 11px;
  border: 2px solid #e6e8eb;
  border-radius: 6px;
  background: #f6f7f9;
  font-size: 32px;
  line-height: 38px;
}

.chip select {
  appearance: none;
}

.chip .tri {
  border-width: 12px 7px 0;
}

.ma-row > label.chip {
  padding: 0 8px;
}

.ma-grid {
  display: grid;
  grid-template-columns: 202px 208px 210px;
  flex: 1;
}

.ma-grid span {
  display: flex;
  align-items: center;
  justify-content: flex-end;
  gap: 10px;
  line-height: 47px;
}

svg.up {
  transform: rotate(180deg);
}

.dk {
  margin-right: 40px;
  padding: 0 5px 0 11px;
}

.dk i {
  align-self: flex-end;
  margin: 0 0 6px 14px;
  border-left: 10px solid transparent;
  border-bottom: 10px solid #222;
}

/* Candle chart */
.chart {
  position: relative;
  margin: 0 12px;
}

.plot {
  width: 100%;
  height: auto;
}

.candle path {
  fill: none;
  stroke-width: 2;
}

.candle.r path,
.candle.r rect {
  stroke: #b04242;
}

.candle.r rect {
  fill: #fdf1f0;
  stroke-width: 2;
}

.candle.g path {
  stroke: #1b901b;
}

.candle.g rect {
  fill: #1b901b;
}

.candle.k path {
  stroke: #222;
}

.candle.k rect {
  fill: #222;
}

.lines {
  fill: none;
  stroke-width: 2.5;
  stroke-linejoin: round;
}

.watermark {
  font-size: 94px;
  font-weight: 900;
  text-anchor: middle;
  fill: #f8f8f8;
}

.axis,
.axis-top {
  font-size: 34px;
  fill: #888;
}

.extreme {
  font-size: 35px;
  fill: #222;
}

.sell {
  font-size: 35px;
  font-weight: 400;
  fill: #b03a3a;
}

.doodle {
  position: absolute;
  inset: 0;
  width: 100%;
  height: 100%;
  fill: none;
  stroke: #f5350f;
  stroke-width: 10;
  stroke-linecap: round;
  stroke-linejoin: round;
  pointer-events: none;
}

.controls {
  position: absolute;
  left: 28px;
  right: 155px;
  bottom: 10px;
  display: flex;
  justify-content: space-between;
  mix-blend-mode: multiply;
}

.round {
  position: relative;
  display: flex;
  align-items: center;
  justify-content: center;
  width: 62px;
  height: 62px;
  border-radius: 50%;
  background: #fff0e8;
}

.round path {
  fill: none;
  stroke: #c8622e;
  stroke-width: 3;
}

.round.next {
  background: #f2f2f2;
}

.round.next path {
  stroke: #666;
}

.round .dot {
  position: absolute;
  left: 22px;
  bottom: 0;
}

.round.expand .dot {
  left: 78px;
}

/* Volume */
.vol-row {
  display: flex;
  align-items: center;
  margin: 0 12px;
  padding-left: 4px;
  height: 57px;
  gap: 17px;
  font-size: 35px;
  line-height: 50px;
  white-space: nowrap;
}

.vol-row > span {
  display: flex;
  align-items: center;
  gap: 8px;
}

.vol-select {
  gap: 12px;
  padding: 0 6px;
  margin-right: -12px;
}

.fold {
  display: flex;
  align-items: center;
  justify-content: center;
  width: 41px;
  height: 56px;
  margin-left: auto;
  border-radius: 12px 0 0 12px;
  background: #999;
}

.volume {
  margin: 0 12px;
}

.vol-r {
  fill: #fdecea;
  stroke: #b04242;
  stroke-width: 2;
}

.vol-g {
  fill: #129612;
}

.dates {
  font-size: 34px;
  fill: #666;
}

/* Promo */
.promo {
  display: flex;
  align-items: center;
  margin: 16px 17px;
  padding: 14px 35px 14px 27px;
  border-radius: 42px;
  background: #fcede4;
  color: #c4602c;
  font-size: 36px;
  line-height: 55px;
}

.promo a {
  flex: 1;
  margin-left: 50px;
}

.promo .plain {
  padding-left: 14px;
  border-left: 1px solid #c4602c;
}

.sections {
  display: flex;
  padding: 0 31px;
  border-top: 2px solid #ddd;
  border-bottom: 2px solid #ddd;
}

/* Cards */
.cards {
  display: flex;
  gap: 17px;
  padding: 10px 41px 0 33px;
}

.card {
  position: relative;
  flex: 1;
  display: flex;
  align-items: center;
  gap: 12px;
  padding: 22px 22px 12px;
  border-radius: 22px 22px 0 0;
  background: #fff6f4;
  overflow: hidden;
  font-size: 38px;
  line-height: 54px;
  font-weight: 400;
}

.card > * {
  position: relative;
}

.card .card-bg {
  position: absolute;
  inset: 0;
  width: 100%;
  height: 100%;
}

/* Toolbar */
.toolbar {
  display: flex;
  height: 126px;
  border-top: 2px solid #ddd;
  background: #f7f9fb;
  font-size: 32px;
}

.index {
  flex: 0 0 251px;
  padding-top: 8px;
  display: flex;
  flex-direction: column;
  align-items: center;
}

.index .tri {
  border-width: 0 10px 8px;
  border-style: solid;
  border-color: transparent transparent #777;
}

.index b {
  font-size: 37px;
  line-height: 56px;
  font-weight: 300;
  color: #1c8a1c;
}

.index-row {
  display: flex;
  gap: 40px;
  margin-left: 38px;
  line-height: 36px;
  color: #666;
}

.index em {
  font-style: normal;
  font-size: 36px;
  color: #1c8a1c;
}

.tool {
  flex: 1;
  display: flex;
  flex-direction: column;
  align-items: center;
  padding-top: 8px;
  line-height: 40px;
  color: #666;
}

.tool-icon {
  position: relative;
  margin-bottom: 12px;
}

.tool-icon path {
  fill: none;
  stroke: #666;
  stroke-width: 3;
}

.tool-icon .solid {
  fill: #666;
  stroke: none;
}

.tool-icon .dot {
  position: absolute;
  right: -22px;
  top: -5px;
}

.sys-nav {
  display: flex;
  justify-content: center;
  gap: 200px;
  margin: 0 66px;
  padding: 45px 0;
  border-top: 2px solid #e8e8e8;
}

.sys-nav svg {
  fill: none;
  stroke: #777;
  stroke-width: 4;
}
</style>
